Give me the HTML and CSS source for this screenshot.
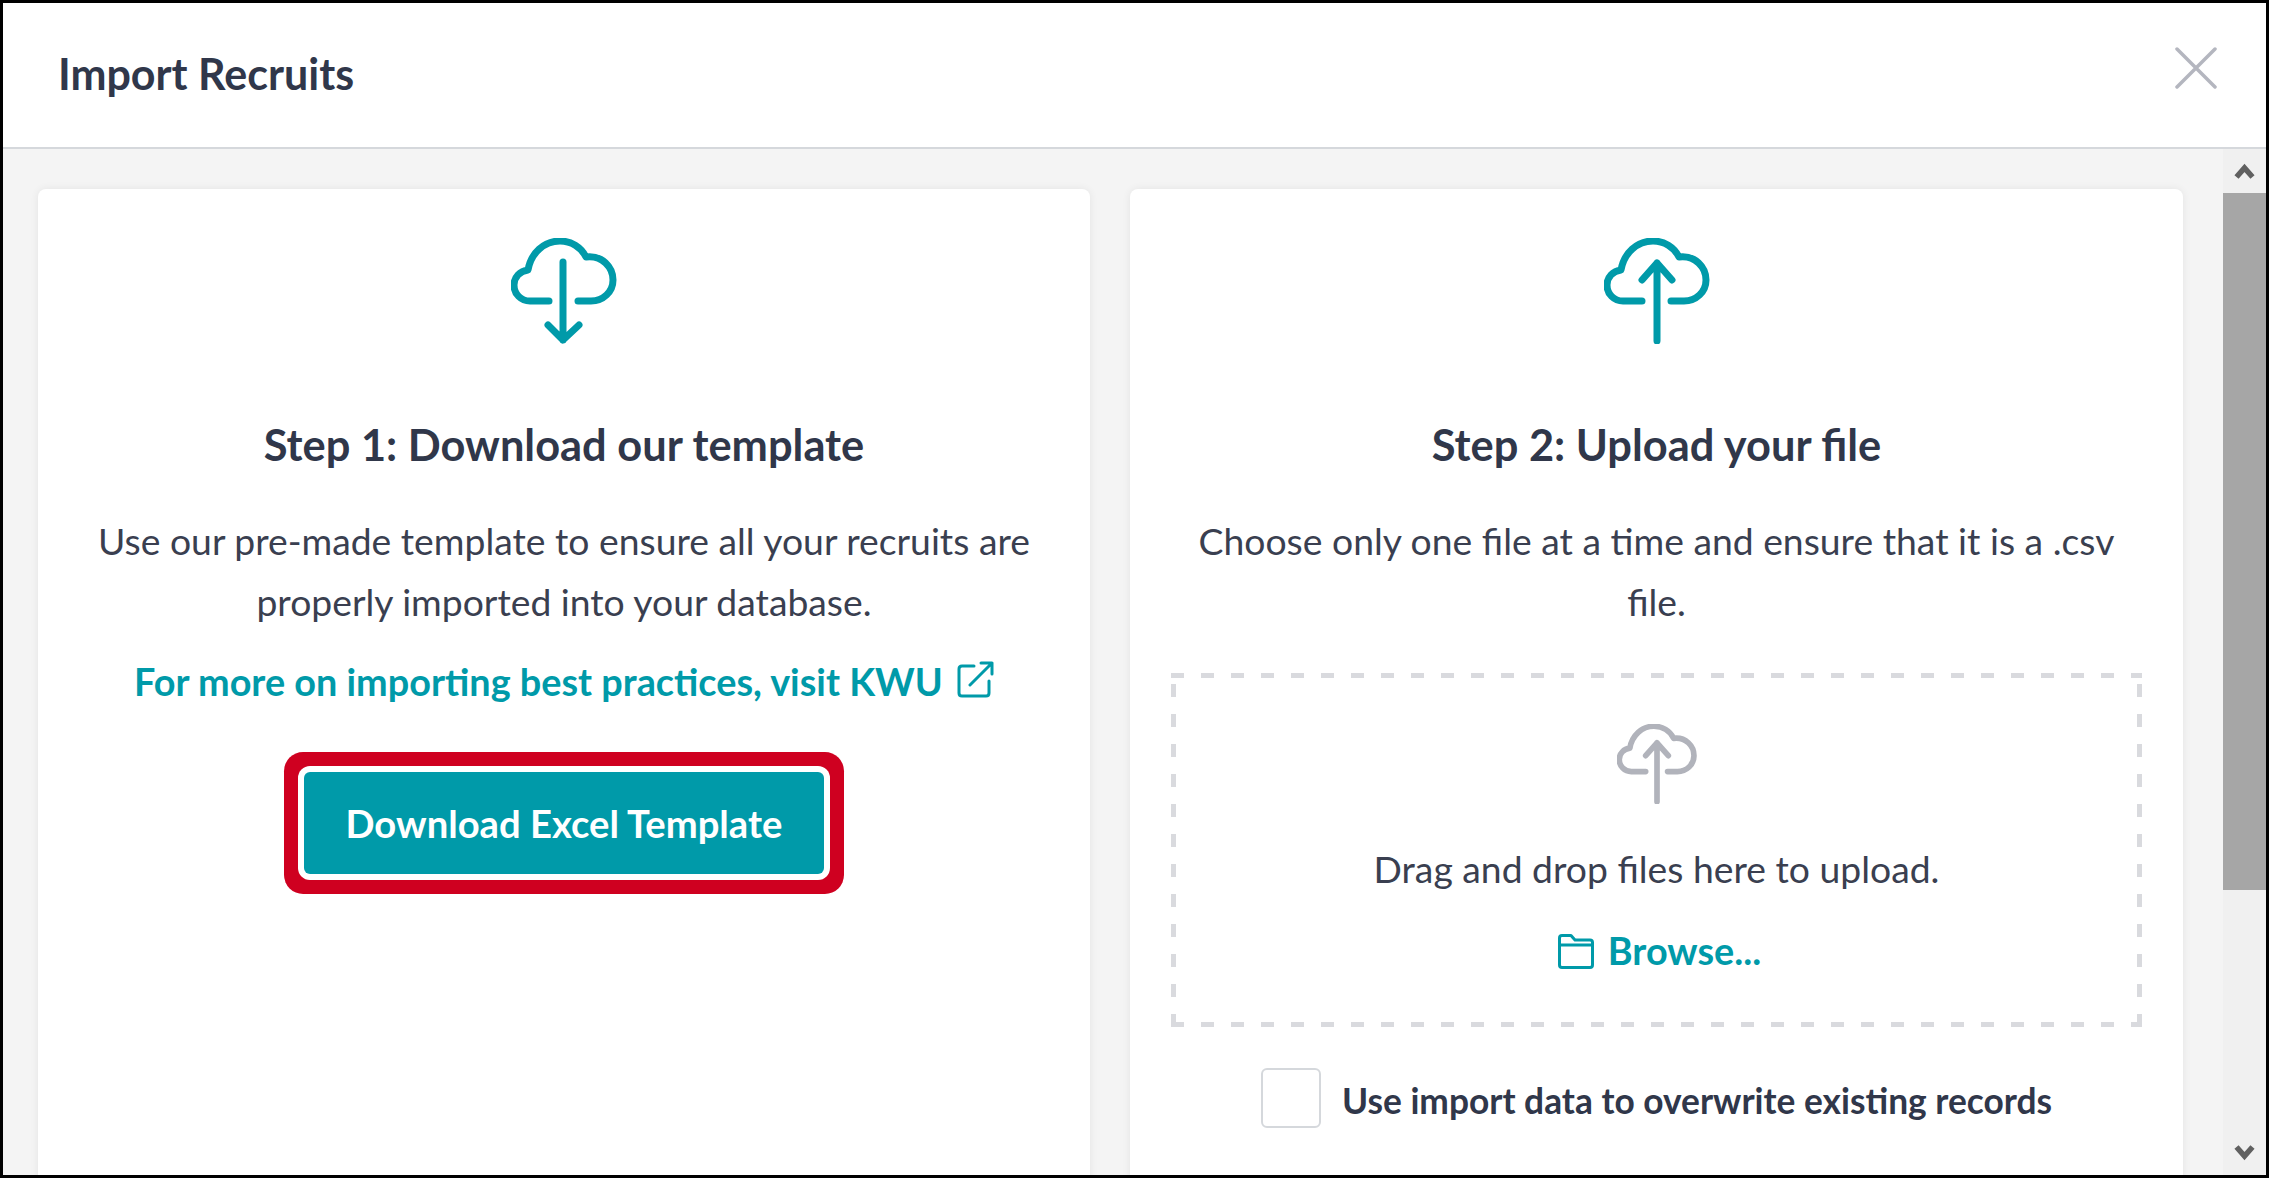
FILE: index.html
```html
<!DOCTYPE html>
<html lang="en">
<head>
<meta charset="UTF-8" />
<title>Import Recruits</title>
<link rel="stylesheet" href="styles.css">
</head>
<body>

<div class="modal">
  <header class="modal-head">
    <h1>Import Recruits</h1>
    <svg class="close" viewBox="0 0 42 42"><path d="M2 2L40 40M40 2L2 40"/></svg>
  </header>

  <div class="modal-body">
    <main class="steps">
      <section class="card">
        <svg class="cloud" viewBox="0 0 106 106">
          <path d="M38 63H19C10 63 3 56 3 47C3 39 9 33 17 32C20 15 33 3 49 3C60 3 70 9 75 19C91 17 102 29 102 42C102 54 92 63 80 63H67"/>
          <path d="M52 24V102M37 87L52 102L68 87"/>
        </svg>
        <h2>Step 1: Download our template</h2>
        <p>Use our pre-made template to ensure all your recruits are properly imported into your database.</p>
        <a class="kwu" href="#">For more on importing best practices, visit KWU
          <svg class="ext" viewBox="0 0 37 37">
            <path d="M17 5H5Q2 5 2 8V32Q2 35 5 35H29Q32 35 32 32V20"/>
            <path d="M13 24L35 2M24 2H35V13"/>
          </svg>
        </a>
        <button class="btn">Download Excel Template</button>
      </section>

      <section class="card">
        <svg class="cloud" viewBox="0 0 106 106">
          <path d="M38 63H19C10 63 3 56 3 47C3 39 9 33 17 32C20 15 33 3 49 3C60 3 70 9 75 19C91 17 102 29 102 42C102 54 92 63 80 63H67"/>
          <path d="M53 103V25M38 42L53 25L68 42"/>
        </svg>
        <h2>Step 2: Upload your file</h2>
        <p>Choose only one file at a time and ensure that it is a .csv file.</p>
        <div class="drop">
          <svg class="cloud small" viewBox="0 0 106 106">
            <path d="M38 63H19C10 63 3 56 3 47C3 39 9 33 17 32C20 15 33 3 49 3C60 3 70 9 75 19C91 17 102 29 102 42C102 54 92 63 80 63H67"/>
            <path d="M53 103V25M38 42L53 25L68 42"/>
          </svg>
          <div class="drop-text">Drag and drop files here to upload.</div>
          <a class="browse" href="#">
            <svg class="folder" viewBox="0 0 36 35">
              <path d="M1.5 31V4Q1.5 1.5 4 1.5H13L17 6H32Q34.500 6 34.500 8.500V31Q34.500 33.500 32 33.500H4Q1.500 33.500 1.500 31ZM1.500 11H34.500"/>
            </svg>
            Browse...
          </a>
        </div>
        <label class="overwrite">
          <span class="check"></span>
          <span class="overwrite-text">Use import data to overwrite existing records</span>
        </label>
      </section>
    </main>

    <div class="scrollbar">
      <div class="arrow">
        <svg viewBox="0 0 21 16"><path d="M2.500 14L10.500 5L18.500 14"/></svg>
      </div>
      <div class="thumb"></div>
      <div class="arrow down">
        <svg viewBox="0 0 21 16"><path d="M2.500 2L10.500 11L18.500 2"/></svg>
      </div>
    </div>
  </div>
</div>

</body>
</html>
```

FILE: styles.css
```css
* {
  box-sizing: border-box;
}
html, body {
  margin: 0;
  padding: 0;
  background: #fff;
}
body {
  font-family: Lato, sans-serif;
  color: #3a3f50;
}
.modal {
  width: 2269px;
  height: 1178px;
  border: 3px solid #000;
  display: flex;
  flex-direction: column;
  overflow: hidden;
}
.modal-head {
  height: 146px;
  flex: none;
  background: #fff;
  border-bottom: 2px solid #d5d8dc;
  display: flex;
  align-items: center;
  justify-content: space-between;
  padding: 0 49px 4px 55px;
}
.modal-head h1 {
  margin: 0;
  font-size: 43px;
  font-weight: 700;
  color: #30374a;
}
.close {
  width: 42px;
  height: 42px;
  margin-bottom: 10px;
  fill: none;
  stroke: #b4b6bf;
  stroke-width: 3.5;
  stroke-linecap: round;
}
.modal-body {
  flex: 1;
  min-height: 0;
  display: flex;
  background: #f4f4f4;
}
.steps {
  flex: 1;
  display: grid;
  grid-template-columns: 1052px 1053px;
  gap: 40px;
  padding: 40px 40px 0 35px;
}
.card {
  height: 1100px;
  background: #fff;
  border-radius: 8px;
  box-shadow: 0 0 9px rgba(0,0,0,0.07);
  padding: 49px 40px 0;
  display: flex;
  flex-direction: column;
  align-items: center;
  text-align: center;
}
.cloud {
  width: 106px;
  height: 106px;
  flex: none;
  fill: none;
  stroke: #009aa9;
  stroke-width: 7;
  stroke-linecap: round;
  stroke-linejoin: round;
}
.cloud.small {
  width: 80px;
  height: 80px;
  stroke: #b1b3bb;
  stroke-width: 7.500;
}
.card h2 {
  margin: 75px 0 0;
  font-size: 43.400px;
  line-height: 50px;
  font-weight: 700;
  color: #30374a;
}
.card p {
  margin: 41px 0 0;
  font-size: 37.300px;
  line-height: 61px;
}
.kwu {
  margin-top: 25px;
  display: flex;
  align-items: center;
  gap: 14px;
  color: #009aa9;
  font-size: 37.800px;
  font-weight: 700;
  line-height: 50px;
  text-decoration: none;
}
.ext {
  width: 37px;
  height: 37px;
  margin-top: -5px;
  fill: none;
  stroke: #009aa9;
  stroke-width: 3;
  stroke-linecap: round;
  stroke-linejoin: round;
}
.btn {
  margin-top: 65px;
  width: 520px;
  height: 102px;
  background: #009aa9;
  color: #fff;
  border: none;
  border-radius: 6px;
  font-family: inherit;
  font-size: 38.200px;
  font-weight: 700;
  box-shadow: 0 0 0 6px #fff, 0 0 0 20px #cf0020;
}
.drop {
  margin-top: 41px;
  width: 971px;
  height: 354px;
  flex: none;
  padding-top: 51px;
  display: flex;
  flex-direction: column;
  align-items: center;
  background:
    repeating-linear-gradient(90deg, #d9dade 0 13px, transparent 13px 30px) top left / 100% 5px no-repeat,
    repeating-linear-gradient(90deg, #d9dade 0 13px, transparent 13px 30px) bottom left / 100% 5px no-repeat,
    repeating-linear-gradient(0deg, #d9dade 0 13px, transparent 13px 30px) top left / 5px 100% no-repeat,
    repeating-linear-gradient(0deg, #d9dade 0 13px, transparent 13px 30px) top right / 5px 100% no-repeat;
}
.drop-text {
  margin-top: 40px;
  font-size: 37.300px;
  line-height: 50px;
}
.browse {
  margin-top: 32px;
  margin-left: 6px;
  display: flex;
  align-items: center;
  gap: 14px;
  color: #009aa9;
  font-size: 37.800px;
  font-weight: 700;
  line-height: 50px;
  text-decoration: none;
}
.folder {
  width: 36px;
  height: 35px;
  fill: none;
  stroke: #009aa9;
  stroke-width: 3;
  stroke-linejoin: round;
}
.overwrite {
  margin-top: 41px;
  display: flex;
  align-items: center;
  gap: 21px;
  font-size: 35.300px;
  font-weight: 700;
  color: #30374a;
}
.overwrite-text {
  padding-top: 4px;
}
.check {
  width: 60px;
  height: 60px;
  border: 2px solid #d5d8dc;
  border-radius: 6px;
  background: #fff;
}
.scrollbar {
  width: 43px;
  flex: none;
  background: #f0f0f0;
  display: flex;
  flex-direction: column;
}
.arrow {
  height: 44px;
  flex: none;
  display: flex;
  justify-content: center;
  align-items: center;
}
.arrow svg {
  width: 21px;
  height: 16px;
  fill: none;
  stroke: #606060;
  stroke-width: 5.500;
}
.arrow.down {
  margin-top: auto;
}
.thumb {
  height: 697px;
  background: #a6a6a6;
}
```
